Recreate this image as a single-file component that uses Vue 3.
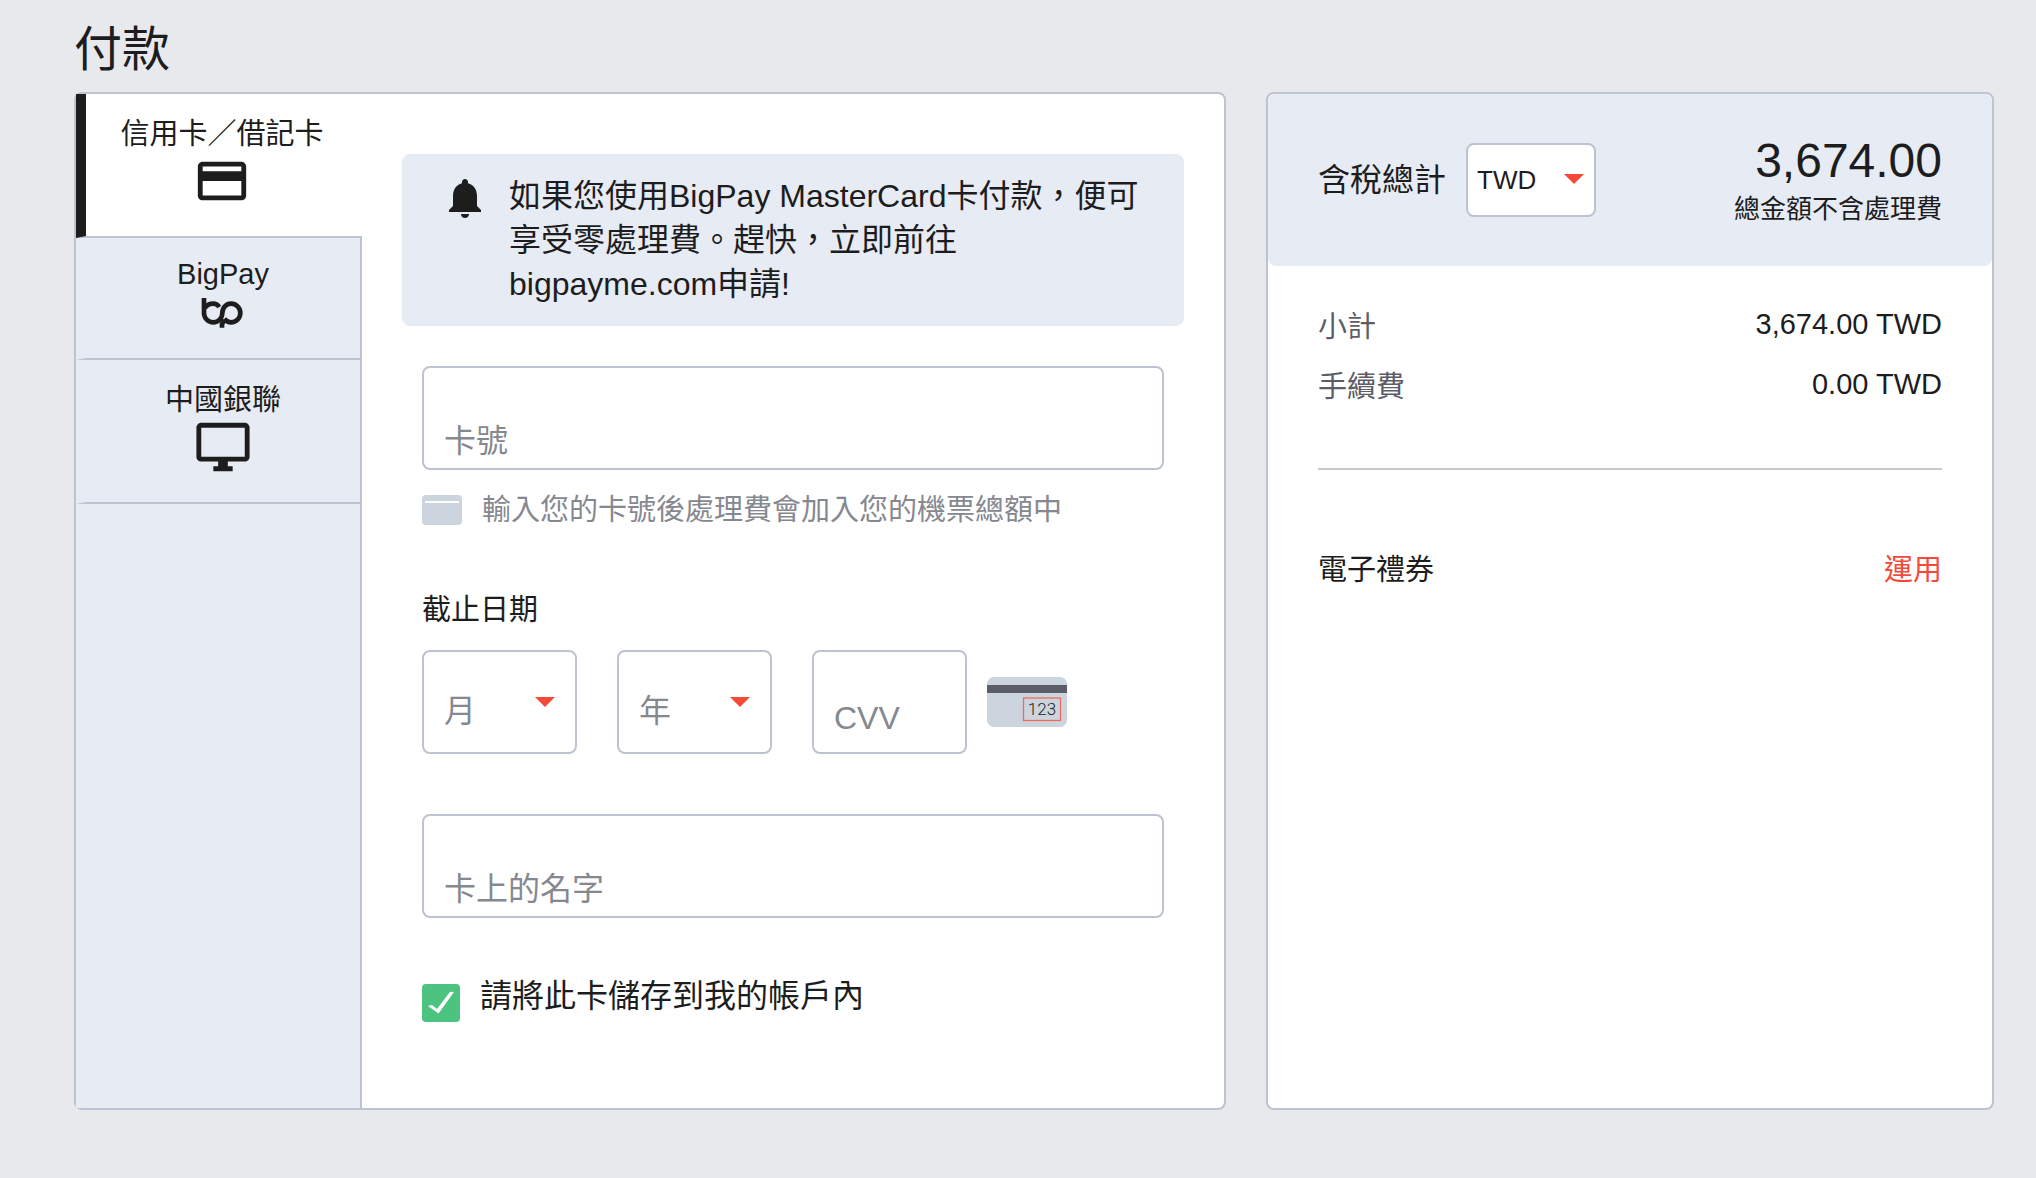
<script setup>
import { ref } from 'vue'

const method = ref('card')
const cardNumber = ref('')
const month = ref('')
const year = ref('')
const cvv = ref('')
const holder = ref('')
const saveCard = ref(true)
const currency = ref('TWD')

const months = Array.from({ length: 12 }, (_, i) => String(i + 1).padStart(2, '0'))
const years = Array.from({ length: 10 }, (_, i) => String(2019 + i))
</script>

<template>
  <main class="page">
    <h1 class="title">付款</h1>
    <div class="columns">
      <section class="card payment">
        <nav class="tabs">
          <button type="button" class="tab" :class="{ active: method === 'card' }" @click="method = 'card'">
            <span>信用卡／借記卡</span>
            <svg class="tab-icon" viewBox="0 0 24 24" aria-hidden="true">
              <path d="M20 4H4c-1.11 0-1.99.89-1.99 2L2 18c0 1.11.89 2 2 2h16c1.11 0 2-.89 2-2V6c0-1.11-.89-2-2-2zm0 14H4v-6h16v6zm0-10H4V6h16v2z" />
            </svg>
          </button>
          <button type="button" class="tab brand" :class="{ active: method === 'bigpay' }" @click="method = 'bigpay'">
            <span>BigPay</span>
            <svg class="brand-icon" viewBox="423 186 132 114" fill="none" stroke="#1d1d1d" stroke-width="14" aria-hidden="true">
              <path d="M432 204V249A28 28 0 0 0 460 277A27 28 0 0 0 487 249A26 28 0 0 1 513 221A28 28 0 0 1 513 277Q502 277 493 266" />
              <path d="M434 234Q444 221 459 221Q471 221 478 231" />
              <path d="M486 293V282L494 270" />
            </svg>
          </button>
          <button type="button" class="tab" :class="{ active: method === 'unionpay' }" @click="method = 'unionpay'">
            <span>中國銀聯</span>
            <svg class="tab-icon" viewBox="0 0 24 24" aria-hidden="true">
              <path d="M21 2H3c-1.100 0-2 .9-2 2v12c0 1.100.9 2 2 2h7v2H8v2h8v-2h-2v-2h7c1.100 0 2-.9 2-2V4c0-1.100-.9-2-2-2zm0 14H3V4h18v12z" />
            </svg>
          </button>
          <div class="tabs-rest"></div>
        </nav>

        <div class="panel">
          <div class="notice">
            <svg class="bell" viewBox="0 0 24 24" aria-hidden="true">
              <path d="M12 22c1.100 0 2-.7 2-2h-4c0 1.300.9 2 2 2zM18 16v-5c0-3.070-1.640-5.640-4.500-6.320V4c0-.83-.67-1.500-1.500-1.500s-1.500.67-1.500 1.500v.68C7.630 5.360 6 7.920 6 11v5l-2 2v1h16v-1l-2-2z" />
            </svg>
            <p>如果您使用BigPay MasterCard卡付款，便可享受零處理費。趕快，立即前往 bigpayme.com申請!</p>
          </div>

          <form class="form" @submit.prevent>
            <input v-model="cardNumber" class="field" type="text" inputmode="numeric" placeholder="卡號" aria-label="卡號" />
            <div class="hint">
              <svg class="mini-card" viewBox="0 0 40 30" aria-hidden="true">
                <rect width="40" height="30" rx="4" fill="#ccd5dd" />
                <rect x="3" y="6" width="34" height="2" fill="#fff" />
              </svg>
              <span>輸入您的卡號後處理費會加入您的機票總額中</span>
            </div>

            <fieldset class="expiry">
              <legend>截止日期</legend>
              <div class="expiry-row">
                <div class="select">
                  <select v-model="month" aria-label="月">
                    <option value="">月</option>
                    <option v-for="m in months" :key="m" :value="m">{{ m }}</option>
                  </select>
                  <svg class="arrow" viewBox="0 0 20 10" aria-hidden="true"><path d="M0 0h20L10 10z" /></svg>
                </div>
                <div class="select">
                  <select v-model="year" aria-label="年">
                    <option value="">年</option>
                    <option v-for="y in years" :key="y" :value="y">{{ y }}</option>
                  </select>
                  <svg class="arrow" viewBox="0 0 20 10" aria-hidden="true"><path d="M0 0h20L10 10z" /></svg>
                </div>
                <div class="cvv">
                  <input v-model="cvv" class="field cvv-field" type="text" inputmode="numeric" placeholder="CVV" aria-label="CVV" />
                  <svg class="cvv-card" viewBox="0 0 80 50" aria-hidden="true">
                    <rect width="80" height="50" rx="7" fill="#ccd5dd" />
                    <rect y="8" width="80" height="8" fill="#5c5d67" />
                    <rect x="36.500" y="21" width="37" height="22.500" fill="none" stroke="#ee6b64" stroke-width="1.300" />
                    <text x="55" y="38" text-anchor="middle">123</text>
                  </svg>
                </div>
              </div>
            </fieldset>

            <input v-model="holder" class="field" type="text" placeholder="卡上的名字" aria-label="卡上的名字" />

            <label class="save">
              <span class="check">
                <input v-model="saveCard" type="checkbox" />
                <svg v-if="saveCard" viewBox="0 0 38 38" aria-hidden="true">
                  <path d="M6 22L10 21L15 25L27.500 8.500Q29 7.500 32 8L16.500 29.500Z" />
                </svg>
              </span>
              <span>請將此卡儲存到我的帳戶內</span>
            </label>
          </form>
        </div>
      </section>

      <aside class="card summary">
        <header class="total">
          <label class="total-label" for="currency">含稅總計</label>
          <div class="select currency">
            <select id="currency" v-model="currency">
              <option>TWD</option>
              <option>USD</option>
            </select>
            <svg class="arrow" viewBox="0 0 20 10" aria-hidden="true"><path d="M0 0h20L10 10z" /></svg>
          </div>
          <div class="amount">
            <strong>3,674.00</strong>
            <small>總金額不含處理費</small>
          </div>
        </header>
        <div class="details">
          <dl>
            <div class="row">
              <dt>小計</dt>
              <dd>3,674.00 TWD</dd>
            </div>
            <div class="row">
              <dt>手續費</dt>
              <dd>0.00 TWD</dd>
            </div>
          </dl>
          <hr />
          <div class="voucher">
            <span>電子禮券</span>
            <a href="#">運用</a>
          </div>
        </div>
      </aside>
    </div>
  </main>
</template>

<style>
body {
  background: #e8e9ed;
}
</style>

<style scoped>
*,
*::before,
*::after {
  box-sizing: border-box;
}
.page {
  min-height: 100vh;
  padding: 20px 42px 68px 74px;
  background: #e8e9ed;
  color: #1d1d1d;
  font-family: "Liberation Sans", "Noto Sans CJK TC", sans-serif;
  font-size: 29px;
  line-height: 36px;
}
button,
input,
select {
  font-family: inherit;
  color: inherit;
}
.title {
  margin: 0 0 12px;
  font-size: 48px;
  font-weight: 400;
  line-height: 60px;
}
.columns {
  display: grid;
  grid-template-columns: minmax(0, 1152fr) minmax(0, 728fr);
  gap: 40px;
}
.card {
  border: 2px solid #bdc4cf;
  border-radius: 8px;
  background: #fff;
}
.payment {
  display: flex;
}

/* payment method tabs */
.tabs {
  display: flex;
  flex: none;
  flex-direction: column;
  width: 286px;
}
.tab {
  display: flex;
  flex-direction: column;
  align-items: center;
  padding: 22px 0 26px;
  border: 0 solid #bdc4cf;
  border-width: 0 2px 2px 10px;
  border-left-color: #e7ebf4;
  background: #e7ebf4;
  font-size: 29px;
  line-height: 36px;
  cursor: pointer;
}
.tab.brand {
  padding: 18px 0 28px;
}
.tab.active {
  padding-right: 4px;
  border-right-width: 0;
  border-left-color: #1d1d1d;
  background: #fff;
}
.tab-icon {
  width: 58px;
  height: 58px;
  fill: #1d1d1d;
}
.brand-icon {
  width: 44px;
  height: 38px;
}
.tabs-rest {
  flex: 1;
  border-right: 2px solid #bdc4cf;
  background: #e7ebf4;
}

/* card form */
.panel {
  flex: 1;
  min-width: 0;
  padding: 60px 40px 86px;
}
.notice {
  display: flex;
  align-items: flex-start;
  gap: 20px;
  padding: 20px 39px;
  border-radius: 8px;
  background: #e7ebf4;
  font-size: 32px;
  line-height: 44px;
}
.notice p {
  margin: 0;
}
.bell {
  flex: none;
  width: 48px;
  height: 48px;
  fill: #1d1d1d;
}
.form {
  display: flex;
  flex-direction: column;
  margin-top: 40px;
  padding: 0 20px;
}
.field {
  display: block;
  width: 100%;
  height: 104px;
  margin: 0;
  padding: 48px 20px 2px;
  border: 2px solid #bec3d0;
  border-radius: 8px;
  outline: 0;
  background: #fff;
  font-size: 32px;
}
.field::placeholder {
  color: #85888f;
  opacity: 1;
}
.hint {
  display: flex;
  align-items: center;
  gap: 20px;
  margin-top: 22px;
  color: #85888f;
}
.mini-card {
  flex: none;
  width: 40px;
  height: 30px;
}
.expiry {
  min-width: 0;
  margin: 64px 0 60px;
  padding: 0;
  border: 0;
}
.expiry legend {
  margin-bottom: 22px;
  padding: 0;
}
.expiry-row {
  display: flex;
  gap: 40px;
}
.select {
  position: relative;
  width: 155px;
}
.select select {
  display: block;
  width: 100%;
  height: 104px;
  margin: 0;
  padding: 18px 44px 0 20px;
  border: 2px solid #bdc4cf;
  border-radius: 8px;
  appearance: none;
  background: #fff;
  color: #85888f;
  font-size: 32px;
}
.arrow {
  position: absolute;
  top: 47px;
  right: 22px;
  width: 20px;
  height: 10px;
  fill: #f5493a;
  pointer-events: none;
}
.cvv {
  display: flex;
  align-items: center;
  gap: 20px;
}
.cvv-field {
  width: 155px;
  padding-top: 32px;
  padding-bottom: 0;
}
.cvv-card {
  flex: none;
  width: 80px;
  height: 50px;
  font-family: Roboto, sans-serif;
  font-size: 17px;
  font-weight: 300;
  fill: #1d1d1d;
}
.save {
  display: flex;
  gap: 20px;
  margin-top: 56px;
  font-size: 32px;
  line-height: 44px;
}
.check {
  position: relative;
  width: 38px;
  height: 38px;
  margin-top: 10px;
}
.check input {
  display: block;
  width: 38px;
  height: 38px;
  margin: 0;
  border: 2px solid #bdc4cf;
  border-radius: 4px;
  appearance: none;
  background: #fff;
}
.check input:checked {
  border-color: #4dc380;
  background: #4dc380;
}
.check svg {
  position: absolute;
  inset: 0;
  fill: #fff;
  pointer-events: none;
}

/* order summary */
.total {
  display: flex;
  align-items: center;
  padding: 38px 50px;
  border-radius: 8px;
  background: #e7ebf4;
}
.total-label {
  margin-right: 20px;
  font-size: 32px;
}
.currency {
  width: 130px;
}
.currency select {
  height: 74px;
  padding: 0 34px 0 9px;
  color: #1d1d1d;
  font-size: 26px;
}
.currency .arrow {
  top: 31px;
  right: 12px;
}
.amount {
  display: flex;
  flex-direction: column;
  margin-left: auto;
  text-align: right;
}
.amount strong {
  font-size: 48px;
  font-weight: 400;
  line-height: 58px;
}
.amount small {
  font-size: 26px;
  line-height: 38px;
}
.details {
  padding: 40px 50px;
}
dl {
  display: flex;
  flex-direction: column;
  gap: 18px;
  margin: 0;
}
.row,
.voucher {
  display: flex;
  align-items: flex-start;
  justify-content: space-between;
}
dt {
  color: #5c5d67;
  line-height: 42px;
}
dd {
  margin: 0;
}
hr {
  height: 2px;
  margin: 60px 0 82px;
  border: 0;
  background: #c9c9cb;
}
.voucher a {
  color: #f5493a;
  text-decoration: none;
}
</style>
